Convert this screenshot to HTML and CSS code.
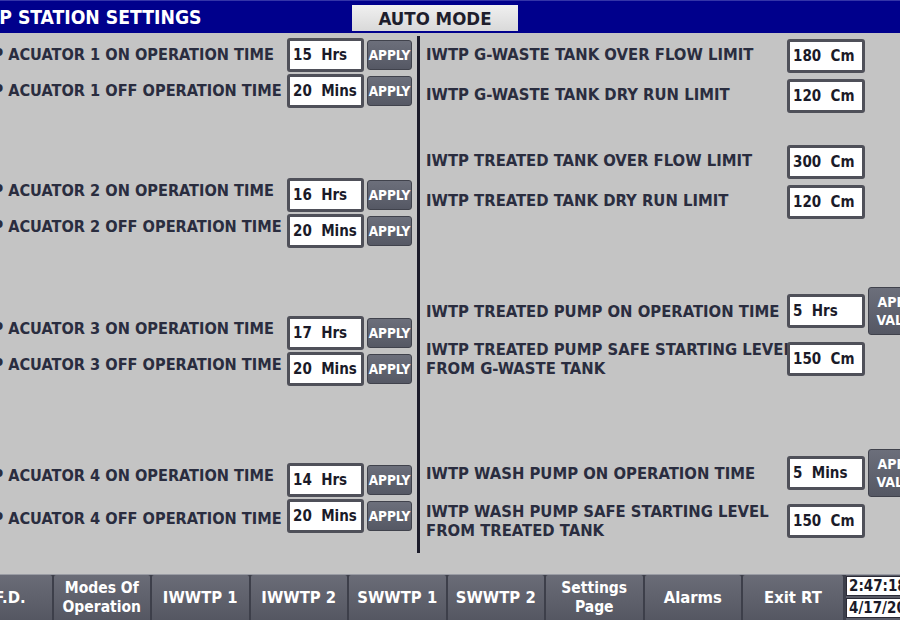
FILE: index.html
```html
<!DOCTYPE html>
<html>
<head>
    <title>IWTP Station Settings</title>
    <link rel="stylesheet" href="styles.css">
</head>
<body>
<div class="screen">
    <header class="topbar">
        <div class="title">IWTP STATION SETTINGS</div>
        <div class="mode">AUTO MODE</div>
    </header>

    <main class="panel">
        <!-- actuator timers -->
        <section class="left">
            <div class="group g1">
                <div class="row">
                    <span class="label">IWTP ACUATOR 1 ON OPERATION TIME</span>
                    <div class="field">15&nbsp; Hrs</div>
                    <button class="apply">APPLY</button>
                </div>
                <div class="row">
                    <span class="label">IWTP ACUATOR 1 OFF OPERATION TIME</span>
                    <div class="field">20&nbsp; Mins</div>
                    <button class="apply">APPLY</button>
                </div>
            </div>
            <div class="group g2">
                <div class="row">
                    <span class="label raise">IWTP ACUATOR 2 ON OPERATION TIME</span>
                    <div class="field">16&nbsp; Hrs</div>
                    <button class="apply">APPLY</button>
                </div>
                <div class="row">
                    <span class="label raise">IWTP ACUATOR 2 OFF OPERATION TIME</span>
                    <div class="field">20&nbsp; Mins</div>
                    <button class="apply">APPLY</button>
                </div>
            </div>
            <div class="group g3">
                <div class="row">
                    <span class="label raise">IWTP ACUATOR 3 ON OPERATION TIME</span>
                    <div class="field">17&nbsp; Hrs</div>
                    <button class="apply">APPLY</button>
                </div>
                <div class="row">
                    <span class="label raise">IWTP ACUATOR 3 OFF OPERATION TIME</span>
                    <div class="field">20&nbsp; Mins</div>
                    <button class="apply">APPLY</button>
                </div>
            </div>
            <div class="group g4">
                <div class="row">
                    <span class="label raise">IWTP ACUATOR 4 ON OPERATION TIME</span>
                    <div class="field">14&nbsp; Hrs</div>
                    <button class="apply">APPLY</button>
                </div>
                <div class="row">
                    <span class="label drop">IWTP ACUATOR 4 OFF OPERATION TIME</span>
                    <div class="field">20&nbsp; Mins</div>
                    <button class="apply">APPLY</button>
                </div>
            </div>
        </section>

        <div class="divider"></div>

        <!-- tank limits and pump settings -->
        <section class="right">
            <div class="pair p1">
                <div class="rrow">
                    <span class="label">IWTP G-WASTE TANK OVER FLOW LIMIT</span>
                    <div class="field">180&nbsp; Cm</div>
                </div>
                <div class="rrow">
                    <span class="label">IWTP G-WASTE TANK DRY RUN LIMIT</span>
                    <div class="field">120&nbsp; Cm</div>
                </div>
            </div>
            <div class="pair p2">
                <div class="rrow">
                    <span class="label">IWTP TREATED TANK OVER FLOW LIMIT</span>
                    <div class="field">300&nbsp; Cm</div>
                </div>
                <div class="rrow">
                    <span class="label">IWTP TREATED TANK DRY RUN LIMIT</span>
                    <div class="field">120&nbsp; Cm</div>
                </div>
            </div>
            <div class="pair p3">
                <div class="rrow tall">
                    <span class="label">IWTP TREATED PUMP ON OPERATION TIME</span>
                    <div class="field">5&nbsp; Hrs</div>
                    <button class="apply wide">APPLY<br>VALUE</button>
                </div>
                <div class="rrow">
                    <span class="label two">IWTP TREATED PUMP SAFE STARTING LEVEL<br>FROM G-WASTE TANK</span>
                    <div class="field">150&nbsp; Cm</div>
                </div>
            </div>
            <div class="pair p4">
                <div class="rrow tall">
                    <span class="label">IWTP WASH PUMP ON OPERATION TIME</span>
                    <div class="field">5&nbsp; Mins</div>
                    <button class="apply wide">APPLY<br>VALUE</button>
                </div>
                <div class="rrow">
                    <span class="label two">IWTP WASH PUMP SAFE STARTING LEVEL<br>FROM TREATED TANK</span>
                    <div class="field">150&nbsp; Cm</div>
                </div>
            </div>
        </section>
    </main>

    <nav class="navbar">
        <button class="navbtn">P.F.D.</button>
        <button class="navbtn small">Modes Of<br>Operation</button>
        <button class="navbtn">IWWTP 1</button>
        <button class="navbtn">IWWTP 2</button>
        <button class="navbtn">SWWTP 1</button>
        <button class="navbtn">SWWTP 2</button>
        <button class="navbtn small">Settings<br>Page</button>
        <button class="navbtn">Alarms</button>
        <button class="navbtn exit">Exit RT</button>
        <div class="clock">
            <div class="clock-cell">2:47:18 PM</div>
            <div class="clock-cell">4/17/2023</div>
        </div>
    </nav>
</div>
</body>
</html>
```

FILE: styles.css
```css
body {
    margin: 0;
    width: 900px;
    height: 620px;
    overflow: hidden;
    background-color: #c4c4c4;
    font-family: "DejaVu Sans Condensed", "DejaVu Sans", sans-serif;
    font-weight: bold;
    color: #2a2d3f;
}

/* the panel is wider than the window, so it is shifted left */
.screen {
    width: 1000px;
    margin-left: -45px;
    display: flex;
    flex-direction: column;
    height: 620px;
}

.topbar {
    height: 33px;
    box-sizing: border-box;
    background-color: #00008c;
    border-top: 1px solid #3434a8;
    display: flex;
    align-items: flex-start;
}

.title {
    width: 390px;
    padding-left: 7px;
    color: #ffffff;
    font-size: 19.2px;
    line-height: 34px;
    white-space: nowrap;
}

.mode {
    margin-top: 4px;
    width: 166px;
    height: 26px;
    background: linear-gradient(#f0f0f0, #d9d9d9);
    color: #1e1e2c;
    font-size: 18.5px;
    line-height: 28px;
    text-align: center;
}

.panel {
    height: 542px;
    display: flex;
}

/* left column */
.left {
    width: 462px;
    padding-left: 6px;
    padding-right: 5px;
    box-sizing: border-box;
}

.group {
    display: flex;
    flex-direction: column;
    gap: 1px;
}

.g1 { margin-top: 4px; }
.g2 { margin-top: 69px; }
.g3 { margin-top: 67px; }
.g4 { margin-top: 76px; }

.row {
    display: grid;
    grid-template-columns: 323px 77px 45px;
    column-gap: 3px;
    align-items: center;
    height: 35px;
}

.label {
    font-size: 16.5px;
    line-height: 19px;
    white-space: nowrap;
}

.row .label {
    font-size: 16.2px;
}

.label.raise {
    margin-bottom: 8px;
}

.label.drop {
    margin-top: 6px;
}

.field {
    height: 34px;
    box-sizing: border-box;
    background-color: #ffffff;
    border: 3px solid #4f5059;
    border-radius: 3px;
    padding-left: 3px;
    display: flex;
    align-items: center;
    font-size: 15px;
    color: #1a1a28;
    white-space: nowrap;
}

.apply {
    height: 30px;
    padding: 0;
    border: 1px solid #40424c;
    border-radius: 3px;
    background: linear-gradient(#6c6f7b, #555864);
    color: #ffffff;
    font-family: inherit;
    font-weight: bold;
    font-size: 13.5px;
}

.apply.wide {
    width: 62px;
    height: 48px;
    line-height: 18px;
    font-size: 14px;
}

.divider {
    width: 3px;
    margin-top: 3px;
    height: 517px;
    background-color: #1c1c2a;
}

/* right column */
.right {
    padding-left: 6px;
}

.pair {
    display: flex;
    flex-direction: column;
    gap: 5px;
}

.p1 { margin-top: 5px; }
.p2 { margin-top: 31px; }
.p3 { margin-top: 68px; }
.p4 { margin-top: 74px; }

.rrow {
    display: grid;
    grid-template-columns: 358px 78px 62px;
    column-gap: 3px;
    align-items: center;
    height: 35px;
}

.rrow.tall {
    height: 48px;
}

.rrow .label {
    margin-bottom: 3px;
}

.rrow.tall .label {
    margin-bottom: 0;
    margin-top: 1px;
}

.rrow .label.two {
    margin-bottom: 0;
}

/* bottom navigation */
.navbar {
    margin-top: auto;
    height: 45px;
    display: flex;
    gap: 2px;
    background-color: #3d3f4a;
    border-top: 1px solid #9a9ca4;
}

.navbtn {
    width: 96.5px;
    flex: none;
    padding: 0;
    border: none;
    border-radius: 2px 2px 0 0;
    background: linear-gradient(#6a6c77, #555762);
    color: #ffffff;
    font-family: inherit;
    font-weight: bold;
    font-size: 16.5px;
}

.navbtn.small {
    font-size: 15.5px;
    line-height: 19px;
}

.navbtn.exit {
    width: 100px;
}

.clock {
    margin-left: 1px;
    padding-top: 1px;
    display: flex;
    flex-direction: column;
    gap: 2px;
    background-color: #5a5c67;
}

.clock-cell {
    width: 110px;
    height: 20px;
    box-sizing: border-box;
    background-color: #ffffff;
    border: 1px solid #2a2a36;
    padding-left: 2px;
    font-size: 15px;
    line-height: 18px;
    color: #1a1a28;
}
```
